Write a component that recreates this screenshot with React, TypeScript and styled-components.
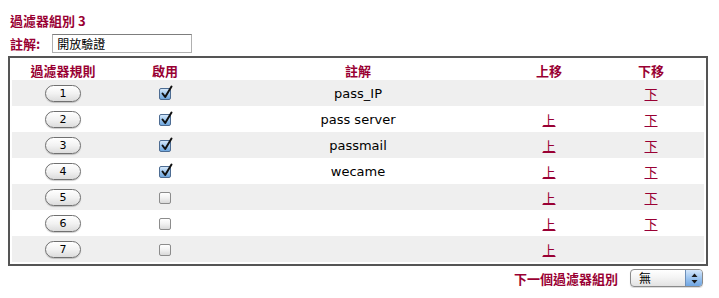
import React from 'react';
import styled, { createGlobalStyle } from 'styled-components';

const MAROON = '#990033';

const GlobalStyle = createGlobalStyle`
  html, body {
    margin: 0;
    padding: 0;
    background: #ffffff;
  }
  body {
    font-family: "DejaVu Sans", "Noto Sans CJK TC", sans-serif;
    font-size: 13px;
    color: #000000;
  }
`;

interface FilterRule {
  id: number;
  enabled: boolean;
  comment: string;
  canUp: boolean;
  canDown: boolean;
}

const rules: FilterRule[] = [
  { id: 1, enabled: true, comment: 'pass_IP', canUp: false, canDown: true },
  { id: 2, enabled: true, comment: 'pass server', canUp: true, canDown: true },
  { id: 3, enabled: true, comment: 'passmail', canUp: true, canDown: true },
  { id: 4, enabled: true, comment: 'wecame', canUp: true, canDown: true },
  { id: 5, enabled: false, comment: '', canUp: true, canDown: true },
  { id: 6, enabled: false, comment: '', canUp: true, canDown: true },
  { id: 7, enabled: false, comment: '', canUp: true, canDown: false },
];

const Page = styled.div`
  width: 700px;
  padding: 0 11px 0 8px;
`;

const Title = styled.h1`
  margin: 0;
  padding: 13px 0 0 2px;
  font-family: "Noto Sans CJK TC", "DejaVu Sans", sans-serif;
  font-size: 13px;
  line-height: 16px;
  font-weight: bold;
  color: ${MAROON};
`;

const CommentRow = styled.div`
  display: flex;
  align-items: center;
  gap: 12px;
  height: 19px;
  margin-top: 5px;
  padding-left: 2px;
`;

const FieldLabel = styled.label`
  font-family: "Noto Sans CJK TC", "DejaVu Sans", sans-serif;
  font-size: 13px;
  font-weight: bold;
  color: ${MAROON};
`;

const TextInput = styled.input`
  box-sizing: border-box;
  width: 140px;
  height: 19px;
  padding: 0 4px;
  border: 1px solid #b0b0b0;
  border-top-color: #7d7d7d;
  font-family: "Noto Sans CJK TC", sans-serif;
  font-size: 12px;
  color: #000;
  outline: none;
`;

const Table = styled.table`
  margin-top: 3px;
  width: 700px;
  table-layout: fixed;
  border-collapse: separate;
  border-spacing: 0;
  padding: 2px;
  border: 2px solid #555555;
  box-sizing: border-box;
`;

const HeadCell = styled.th`
  height: 20px;
  padding: 0;
  text-align: center;
  vertical-align: middle;
  font-family: "Noto Sans CJK TC", "DejaVu Sans", sans-serif;
  font-size: 13px;
  font-weight: bold;
  color: ${MAROON};
`;

const Row = styled.tr<{ $shade: boolean }>`
  background: ${p => (p.$shade ? '#efefef' : '#ffffff')};
`;

const Cell = styled.td`
  height: 26px;
  padding: 0;
  text-align: center;
  vertical-align: middle;
  font-size: 13px;
`;

const NumButton = styled.button`
  box-sizing: border-box;
  display: inline-flex;
  align-items: center;
  justify-content: center;
  width: 36px;
  height: 17px;
  padding: 0;
  border: 1px solid #707070;
  border-radius: 9px;
  background: linear-gradient(#ffffff 0%, #f2f2f2 50%, #dcdcdc 100%);
  box-shadow: 0 1px 1px rgba(0, 0, 0, 0.2);
  font-family: "DejaVu Sans", sans-serif;
  font-size: 11px;
  color: #000;
  vertical-align: middle;
`;

const Check = styled.span<{ $checked: boolean }>`
  position: relative;
  display: inline-block;
  box-sizing: border-box;
  width: 12px;
  height: 12px;
  border: 1px solid ${p => (p.$checked ? '#4d6c92' : '#8c8c8c')};
  border-radius: 2px;
  background: ${p =>
    p.$checked
      ? 'linear-gradient(#d6e8fa 0%, #9cc6ef 50%, #6fa6dd 100%)'
      : 'linear-gradient(#ffffff 0%, #f1f1f1 50%, #d9d9d9 100%)'};
  vertical-align: middle;

  svg {
    position: absolute;
    left: 0;
    top: -4px;
  }
`;

const MoveLink = styled.a`
  font-family: "Noto Sans CJK TC", sans-serif;
  font-size: 13px;
  color: ${MAROON};
  text-decoration: underline;
  cursor: pointer;
`;

const Footer = styled.div`
  display: flex;
  justify-content: flex-end;
  align-items: center;
  gap: 12px;
  height: 20px;
  margin-top: 2px;
  padding-right: 5px;
`;

const FooterLabel = styled.span`
  font-family: "Noto Sans CJK TC", "DejaVu Sans", sans-serif;
  font-size: 13px;
  font-weight: bold;
  color: ${MAROON};
`;

const SelectBox = styled.div`
  box-sizing: border-box;
  display: flex;
  width: 73px;
  height: 18px;
  border: 1px solid #8a8a8a;
  border-radius: 4px;
  overflow: hidden;
  background: linear-gradient(#ffffff 0%, #f3f3f3 50%, #e2e2e2 100%);
  box-shadow: 0 1px 1px rgba(0, 0, 0, 0.15);
`;

const SelectText = styled.span`
  flex: 1;
  padding-left: 8px;
  font-family: "Noto Sans CJK TC", sans-serif;
  font-size: 12px;
  line-height: 16px;
`;

const SelectArrows = styled.span`
  display: flex;
  align-items: center;
  justify-content: center;
  width: 16px;
  border-left: 1px solid #6d8fb8;
  background: linear-gradient(#d5e7fb 0%, #9dc5f0 50%, #6fa5e2 100%);
`;

const CheckMark = () => (
  <svg width="14" height="15" viewBox="0 0 14 15">
    <path d="M2.5 8.5 L5.2 12 L11.5 1.5" fill="none" stroke="#111" strokeWidth="2" strokeLinecap="round" strokeLinejoin="round" />
  </svg>
);

export default function App() {
  return (
    <>
      <GlobalStyle />
      <Page>
        <Title>過濾器組別 3</Title>
        <CommentRow>
          <FieldLabel>註解:</FieldLabel>
          <TextInput readOnly value="開放驗證" />
        </CommentRow>

        <Table>
          <colgroup>
            <col style={{ width: 102 }} />
            <col style={{ width: 102 }} />
            <col style={{ width: 284 }} />
            <col style={{ width: 98 }} />
            <col style={{ width: 106 }} />
          </colgroup>
          <thead>
            <tr>
              <HeadCell>過濾器規則</HeadCell>
              <HeadCell>啟用</HeadCell>
              <HeadCell>註解</HeadCell>
              <HeadCell>上移</HeadCell>
              <HeadCell>下移</HeadCell>
            </tr>
          </thead>
          <tbody>
            {rules.map((r, i) => (
              <Row key={r.id} $shade={i % 2 === 0}>
                <Cell>
                  <NumButton>{r.id}</NumButton>
                </Cell>
                <Cell>
                  <Check $checked={r.enabled}>{r.enabled && <CheckMark />}</Check>
                </Cell>
                <Cell>{r.comment}</Cell>
                <Cell>{r.canUp && <MoveLink>上</MoveLink>}</Cell>
                <Cell>{r.canDown && <MoveLink>下</MoveLink>}</Cell>
              </Row>
            ))}
          </tbody>
        </Table>

        <Footer>
          <FooterLabel>下一個過濾器組別</FooterLabel>
          <SelectBox>
            <SelectText>無</SelectText>
            <SelectArrows>
              <svg width="7" height="11" viewBox="0 0 7 11">
                <path d="M3.5 0.5 L6.5 4 L0.5 4 Z" fill="#1a1a1a" />
                <path d="M0.5 7 L6.5 7 L3.5 10.5 Z" fill="#1a1a1a" />
              </svg>
            </SelectArrows>
          </SelectBox>
        </Footer>
      </Page>
    </>
  );
}
